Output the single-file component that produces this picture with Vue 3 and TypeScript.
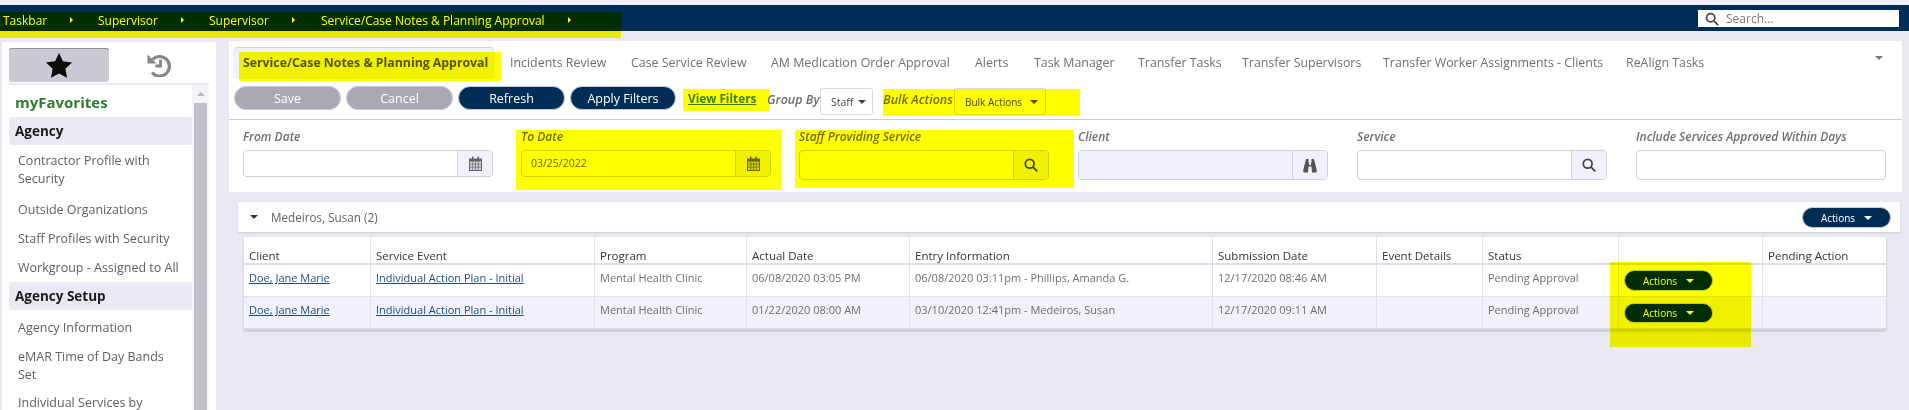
<script setup lang="ts">
const crumbs = ['Taskbar', 'Supervisor', 'Supervisor', 'Service/Case Notes & Planning Approval']
const tabs = [
  { t: 'Incidents Review', w: 121 },
  { t: 'Case Service Review', w: 140 },
  { t: 'AM Medication Order Approval', w: 204 },
  { t: 'Alerts', w: 59 },
  { t: 'Task Manager', w: 104 },
  { t: 'Transfer Tasks', w: 104 },
  { t: 'Transfer Supervisors', w: 141 },
  { t: 'Transfer Worker Assignments - Clients', w: 243 },
  { t: 'ReAlign Tasks', w: 100 },
]
const menu = [
  { t: 'Contractor Profile with Security', h: 49 },
  { t: 'Outside Organizations', h: 29 },
  { t: 'Staff Profiles with Security', h: 29 },
  { t: 'Workgroup - Assigned to All', h: 29 },
]
const menu2 = [
  { t: 'Agency Information', h: 29 },
  { t: 'eMAR Time of Day Bands Set', h: 46 },
  { t: 'Individual Services by', h: 29 },
]
const cols = [
  { t: 'Client', w: 127 },
  { t: 'Service Event', w: 224 },
  { t: 'Program', w: 152 },
  { t: 'Actual Date', w: 163 },
  { t: 'Entry Information', w: 303 },
  { t: 'Submission Date', w: 164 },
  { t: 'Event Details', w: 106 },
  { t: 'Status', w: 136 },
  { t: '', w: 144 },
  { t: 'Pending Action', w: 123 },
]
const rows = [
  { actual: '06/08/2020 03:05 PM', entry: '06/08/2020 03:11pm - Phillips, Amanda G.', sub: '12/17/2020 08:46 AM' },
  { actual: '01/22/2020 08:00 AM', entry: '03/10/2020 12:41pm - Medeiros, Susan', sub: '12/17/2020 09:11 AM' },
]
const gridCols = cols.map((c) => c.w + 'px').join(' ')
</script>

<template>
  <div class="page">
    <div class="strip"></div>
    <header class="nav">
      <div class="crumbs">
        <span v-for="(c, i) in crumbs" :key="i" class="crumb">{{ c }}<i class="right"></i></span>
      </div>
      <div class="search">
        <svg width="14" height="14" viewBox="0 0 16 16" fill="none" stroke="#444" stroke-width="2"><circle cx="6.500" cy="6.500" r="4.700"/><path d="M10 10l5 5"/></svg>
        <span>Search...</span>
      </div>
    </header>
    <div class="body">
      <aside class="side">
        <div class="sidetabs">
          <div class="stab on">
            <svg width="26" height="25" viewBox="0 0 24 23"><path d="M12 0l3.600 7.600 8.400 1.100-6.100 5.800 1.500 8.300L12 18.800l-7.400 4 1.500-8.300L0 8.700l8.400-1.100z" fill="#0b0b0b"/></svg>
          </div>
          <div class="stab">
            <svg width="24" height="24" viewBox="0 0 24 24" fill="none" stroke="#85858b" stroke-width="3.200"><path d="M5.500 6.500A9.800 9.800 0 1 1 5 19.500"/><path d="M0.500 1.500l0 9 9 0z" fill="#85858b" stroke="none"/><path d="M13.500 6.500v6.500h-5" stroke-width="2.800"/></svg>
          </div>
        </div>
        <div class="listwrap">
          <div class="list">
            <div class="fav">myFavorites</div>
            <div class="group">Agency</div>
            <div v-for="m in menu" :key="m.t" class="item" :style="{ height: m.h + 'px' }">{{ m.t }}</div>
            <div class="group g2">Agency Setup</div>
            <div v-for="m in menu2" :key="m.t" class="item" :style="{ height: m.h + 'px' }">{{ m.t }}</div>
          </div>
          <div class="scroll"><i class="up"></i><div class="thumb"></div></div>
        </div>
      </aside>
      <main class="main">
        <section class="panel">
          <nav class="tabs">
            <div class="tab active">Service/Case Notes &amp; Planning Approval</div>
            <div v-for="t in tabs" :key="t.t" class="tab" :style="{ width: t.w + 'px' }">{{ t.t }}</div>
            <i class="down more"></i>
          </nav>
          <div class="toolbar">
            <button class="btn off">Save</button>
            <button class="btn off">Cancel</button>
            <button class="btn navy">Refresh</button>
            <button class="btn navy last">Apply Filters</button>
            <a class="vf">View Filters</a>
            <span class="lbl">Group By</span>
            <div class="sel s1">Staff<i class="down"></i></div>
            <span class="lbl l2">Bulk Actions</span>
            <div class="sel s2">Bulk Actions<i class="down"></i></div>
          </div>
          <div class="filters">
            <div class="f">
              <label>From Date</label>
              <div class="inp h27">
                <span class="field"></span>
                <span class="addon"><svg width="13" height="15" viewBox="0 0 13 15"><path d="M0 2.500h13V15H0z" fill="#666"/><path d="M1 5.500h11V14H1z" fill="#d6d6da"/><path d="M3 0.500h1.500v4H3zM8.500 0.500H10v4H8.500z" fill="#666"/><path d="M1 8.200h11M1 11.100h11M3.700 5.500V14M6.500 5.500V14M9.300 5.500V14" stroke="#666" stroke-width="0.700"/></svg></span>
              </div>
            </div>
            <div class="f">
              <label>To Date</label>
              <div class="inp h27">
                <span class="field val">03/25/2022</span>
                <span class="addon"><svg width="13" height="15" viewBox="0 0 13 15"><path d="M0 2.500h13V15H0z" fill="#666"/><path d="M1 5.500h11V14H1z" fill="#d6d6da"/><path d="M3 0.500h1.500v4H3zM8.500 0.500H10v4H8.500z" fill="#666"/><path d="M1 8.200h11M1 11.100h11M3.700 5.500V14M6.500 5.500V14M9.300 5.500V14" stroke="#666" stroke-width="0.700"/></svg></span>
              </div>
            </div>
            <div class="f">
              <label>Staff Providing Service</label>
              <div class="inp">
                <span class="field"></span>
                <span class="addon"><svg width="14" height="14" viewBox="0 0 16 16" fill="none" stroke="#444" stroke-width="2"><circle cx="6.500" cy="6.500" r="5"/><path d="M10.300 10.300l5 5"/></svg></span>
              </div>
            </div>
            <div class="f">
              <label>Client</label>
              <div class="inp dis">
                <span class="field"></span>
                <span class="addon"><svg width="14" height="15" viewBox="0 0 14 15" fill="#555"><path d="M3 1h2.500v3.500H6V7h2V4.500h.5V1H11l3 12-1 1.500H9L8.500 8.500h-3L5 14.500H1L0 13z"/></svg></span>
              </div>
            </div>
            <div class="f">
              <label>Service</label>
              <div class="inp">
                <span class="field"></span>
                <span class="addon"><svg width="14" height="14" viewBox="0 0 16 16" fill="none" stroke="#444" stroke-width="2"><circle cx="6.500" cy="6.500" r="5"/><path d="M10.300 10.300l5 5"/></svg></span>
              </div>
            </div>
            <div class="f">
              <label>Include Services Approved Within Days</label>
              <div class="inp"><span class="field"></span></div>
            </div>
          </div>
        </section>
        <section class="card">
          <i class="down dark"></i>
          <span class="name">Medeiros, Susan (2)</span>
          <button class="pill top">Actions<i class="down white"></i></button>
        </section>
        <div class="table">
          <div class="tr head" :style="{ gridTemplateColumns: gridCols }">
            <div v-for="c in cols" :key="c.t" class="td">{{ c.t }}</div>
          </div>
          <div v-for="(r, i) in rows" :key="r.actual" class="tr" :class="{ alt: i === 1 }" :style="{ gridTemplateColumns: gridCols }">
            <div class="td"><a>Doe, Jane Marie</a></div>
            <div class="td"><a>Individual Action Plan - Initial</a></div>
            <div class="td">Mental Health Clinic</div>
            <div class="td">{{ r.actual }}</div>
            <div class="td">{{ r.entry }}</div>
            <div class="td">{{ r.sub }}</div>
            <div class="td"></div>
            <div class="td">Pending Approval</div>
            <div class="td act"><button class="pill">Actions<i class="down white"></i></button></div>
            <div class="td"></div>
          </div>
        </div>
      </main>
    </div>
    <i class="hl h1"></i><i class="hl h2"></i><i class="hl h3"></i><i class="hl h4"></i><i class="hl h5"></i><i class="hl h6"></i><i class="hl h7"></i>
  </div>
</template>

<style>
html, body { margin: 0; background: #e8e9f3; }
</style>

<style scoped>
.page { position: relative; width: 1909px; height: 410px; overflow: hidden; background: #e8e9f3; font-family: "Open Sans", "Noto Sans", sans-serif; color: #6e6e74; font-size: 12px; }
i { display: block; }
.strip { height: 5px; background: #f0f1fa; }
.nav { height: 26px; background: #002d56; display: flex; align-items: center; justify-content: space-between; padding-right: 10px; }
.crumbs { display: grid; grid-template-columns: 95px 111px 112px auto; margin-top: 4px; padding-left: 3px; color: #fff; font-size: 12px; }
.crumb { display: flex; align-items: center; }
.crumb .right { margin-left: 23px; width: 0; height: 0; border-left: 3px solid #fff; border-top: 3.500px solid transparent; border-bottom: 3.500px solid transparent; }
.search { width: 201px; height: 17px; margin-top: 1px; box-sizing: border-box; background: #fff; display: flex; align-items: center; padding-left: 7px; gap: 7px; font-size: 12px; color: #777; }
.body { display: flex; padding: 10px 0 0 2px; height: 379px; box-sizing: border-box; }
.side { width: 214px; background: #fff; margin-top: 1px; padding: 6px 0 0 7px; box-sizing: border-box; flex: none; overflow: hidden; }
.sidetabs { display: flex; height: 34px; }
.stab { width: 100px; display: flex; align-items: center; justify-content: center; border-radius: 3px; }
.stab.on { background: #c9cad3; box-shadow: inset 0 1px 0 #8f9099; }
.listwrap { display: flex; margin-top: 1px; border-top: 2px solid #e8e9f3; width: 200px; }
.list { width: 183px; flex: none; }
.fav { height: 32px; line-height: 34px; padding-left: 6px; color: #2e7d32; font-weight: 700; font-size: 15px; }
.group { height: 28px; line-height: 28px; padding-left: 6px; background: #e8e9f3; color: #1b1b1b; font-weight: 700; font-size: 13.500px; border-radius: 3px; }
.g2 { margin-top: 1px; margin-bottom: 2px; }
.item { padding: 7px 0 0 9px; box-sizing: border-box; color: #5e5e63; font-size: 12.500px; line-height: 18px; width: 175px; }
.scroll { position: relative; width: 17px; height: 330px; background: #f3f3f9; }
.up { width: 0; height: 0; margin: 7px auto 0; border-left: 4px solid transparent; border-right: 4px solid transparent; border-bottom: 4px solid #b5b6bf; }
.thumb { position: absolute; left: 2px; right: 2px; top: 18px; bottom: 0; background: #bfc0cb; }
.main { margin-left: 13px; width: 1673px; flex: none; }
.panel { background: #fff; height: 151px; }
.tabs { position: relative; display: flex; height: 44px; padding: 6px 0 0 4px; box-sizing: border-box; align-items: flex-start; }
.tab { height: 32px; line-height: 32px; font-size: 12.400px; white-space: nowrap; flex: none; color: #6e6e74; }
.tab.active { width: 262px; margin-right: 15px; padding-left: 10px; box-sizing: border-box; background: #f0f1fa; border-radius: 5px; border-top: 1px solid #d0d1da; line-height: 30px; font-weight: 700; color: #555; font-size: 12.300px; }
.more { position: absolute; right: 19px; top: 15px; }
.down { width: 0; height: 0; border-left: 4px solid transparent; border-right: 4px solid transparent; border-top: 4px solid #777; }
.toolbar { height: 34px; display: flex; align-items: flex-start; padding-left: 5px; border-bottom: 1px solid #ccc; box-sizing: content-box; margin-top: 0; }
.btn { height: 24px; width: 107px; margin: 1px 5px 0 0; border: 1px solid #c9cad3; border-radius: 12px; font: 12.500px "Open Sans", sans-serif; color: #fff; padding: 0; }
.off { background: #a8a9b2; }
.navy { background: #002d56; }
.last { width: 106px; margin-right: 12px; }
.vf { width: 79px; margin-top: 5px; font-weight: 700; color: #3c7d1e; text-decoration: underline; font-size: 11.800px; white-space: nowrap; line-height: 17px; }
.lbl { font-style: italic; font-weight: 600; font-size: 12.500px; color: #6e6e74; width: 53px; margin-top: 6px; line-height: 17px; white-space: nowrap; }
.l2 { width: 71px; }
.sel { height: 27px; box-sizing: border-box; border: 1px solid #d8d9e0; border-radius: 3px; display: flex; align-items: center; font-size: 10.500px; color: #444; background: #fff; margin-top: 3px; }
.sel .down { margin-left: 5px; border-top-color: #444; }
.s1 { width: 53px; padding-left: 10px; margin-right: 10px; }
.s2 { width: 92px; padding-left: 10px; font-size: 10px; }
.s2 .down { margin-left: 8px; }
.filters { display: grid; grid-template-columns: 278px 278px 279px 279px 279px 250px; padding: 10px 0 0 14px; }
.f label { display: block; height: 20px; font-style: italic; font-weight: 600; font-size: 12px; line-height: 14px; color: #6e6e74; white-space: nowrap; }
.inp { width: 250px; height: 30px; box-sizing: border-box; border: 1px solid #cfd0da; border-radius: 4px; display: flex; overflow: hidden; background: #fff; }
.h27 { height: 27px; }
.field { flex: 1; font-size: 10.500px; color: #666; line-height: 25px; padding-left: 9px; }
.addon { width: 35px; flex: none; background: #f0f1fa; border-left: 1px solid #cfd0da; display: flex; align-items: center; justify-content: center; box-sizing: border-box; }
.dis .field { background: #f0f1fa; }
.card { position: relative; display: flex; align-items: center; margin: 10px 2px 0 9px; height: 30px; background: #fff; box-shadow: 0 1px 2px #c8c9d4; }
.card .dark { margin-left: 12px; border-top-color: #333; }
.name { margin-left: 13px; font-size: 11.700px; color: #5e5e63; }
.pill { width: 89px; height: 21px; display: flex; align-items: center; justify-content: center; gap: 9px; border: 1px solid #c9cad3; border-radius: 11px; background: #002d56; color: #fff; font: 10px "Open Sans", sans-serif; padding: 0; }
.pill.top { position: absolute; right: 9px; top: 5px; }
.white { border-top-color: #fff; }
.table { margin: 5px 0 0 15px; width: 1642px; background: #fff; box-shadow: 0 1px 2px #b8b9c4; }
.tr { display: grid; height: 32px; border-bottom: 1px solid #e0e1ea; box-sizing: border-box; }
.head { height: 28px; border-bottom: 2px solid #dcdde8; color: #333; }
.alt { height: 33px; background: #f0f1fa; border-bottom: 2px solid #d8d9e2; }
.alt .pill { height: 20px; margin-top: 1px; }
.td { border-right: 1px solid #e0e1ea; padding: 5px 5px 0; font-size: 11px; line-height: 15px; white-space: nowrap; overflow: hidden; }
.head .td { padding-top: 11px; font-size: 11.500px; }
.td:last-child { border-right: 0; }
.td a { color: #1f4e79; text-decoration: underline; }
.act { padding: 5px 0 0 5px; }
.hl { position: absolute; mix-blend-mode: multiply; background: #ffff00; }
.h1 { left: 0; top: 12px; width: 621px; height: 26px; }
.h2 { left: 239px; top: 52px; width: 262px; height: 29px; }
.h3 { left: 683px; top: 89px; width: 86px; height: 22px; }
.h4 { left: 883px; top: 89px; width: 197px; height: 27px; }
.h5 { left: 516px; top: 130px; width: 265px; height: 60px; }
.h6 { left: 795px; top: 130px; width: 279px; height: 58px; }
.h7 { left: 1610px; top: 262px; width: 141px; height: 85px; }
</style>
